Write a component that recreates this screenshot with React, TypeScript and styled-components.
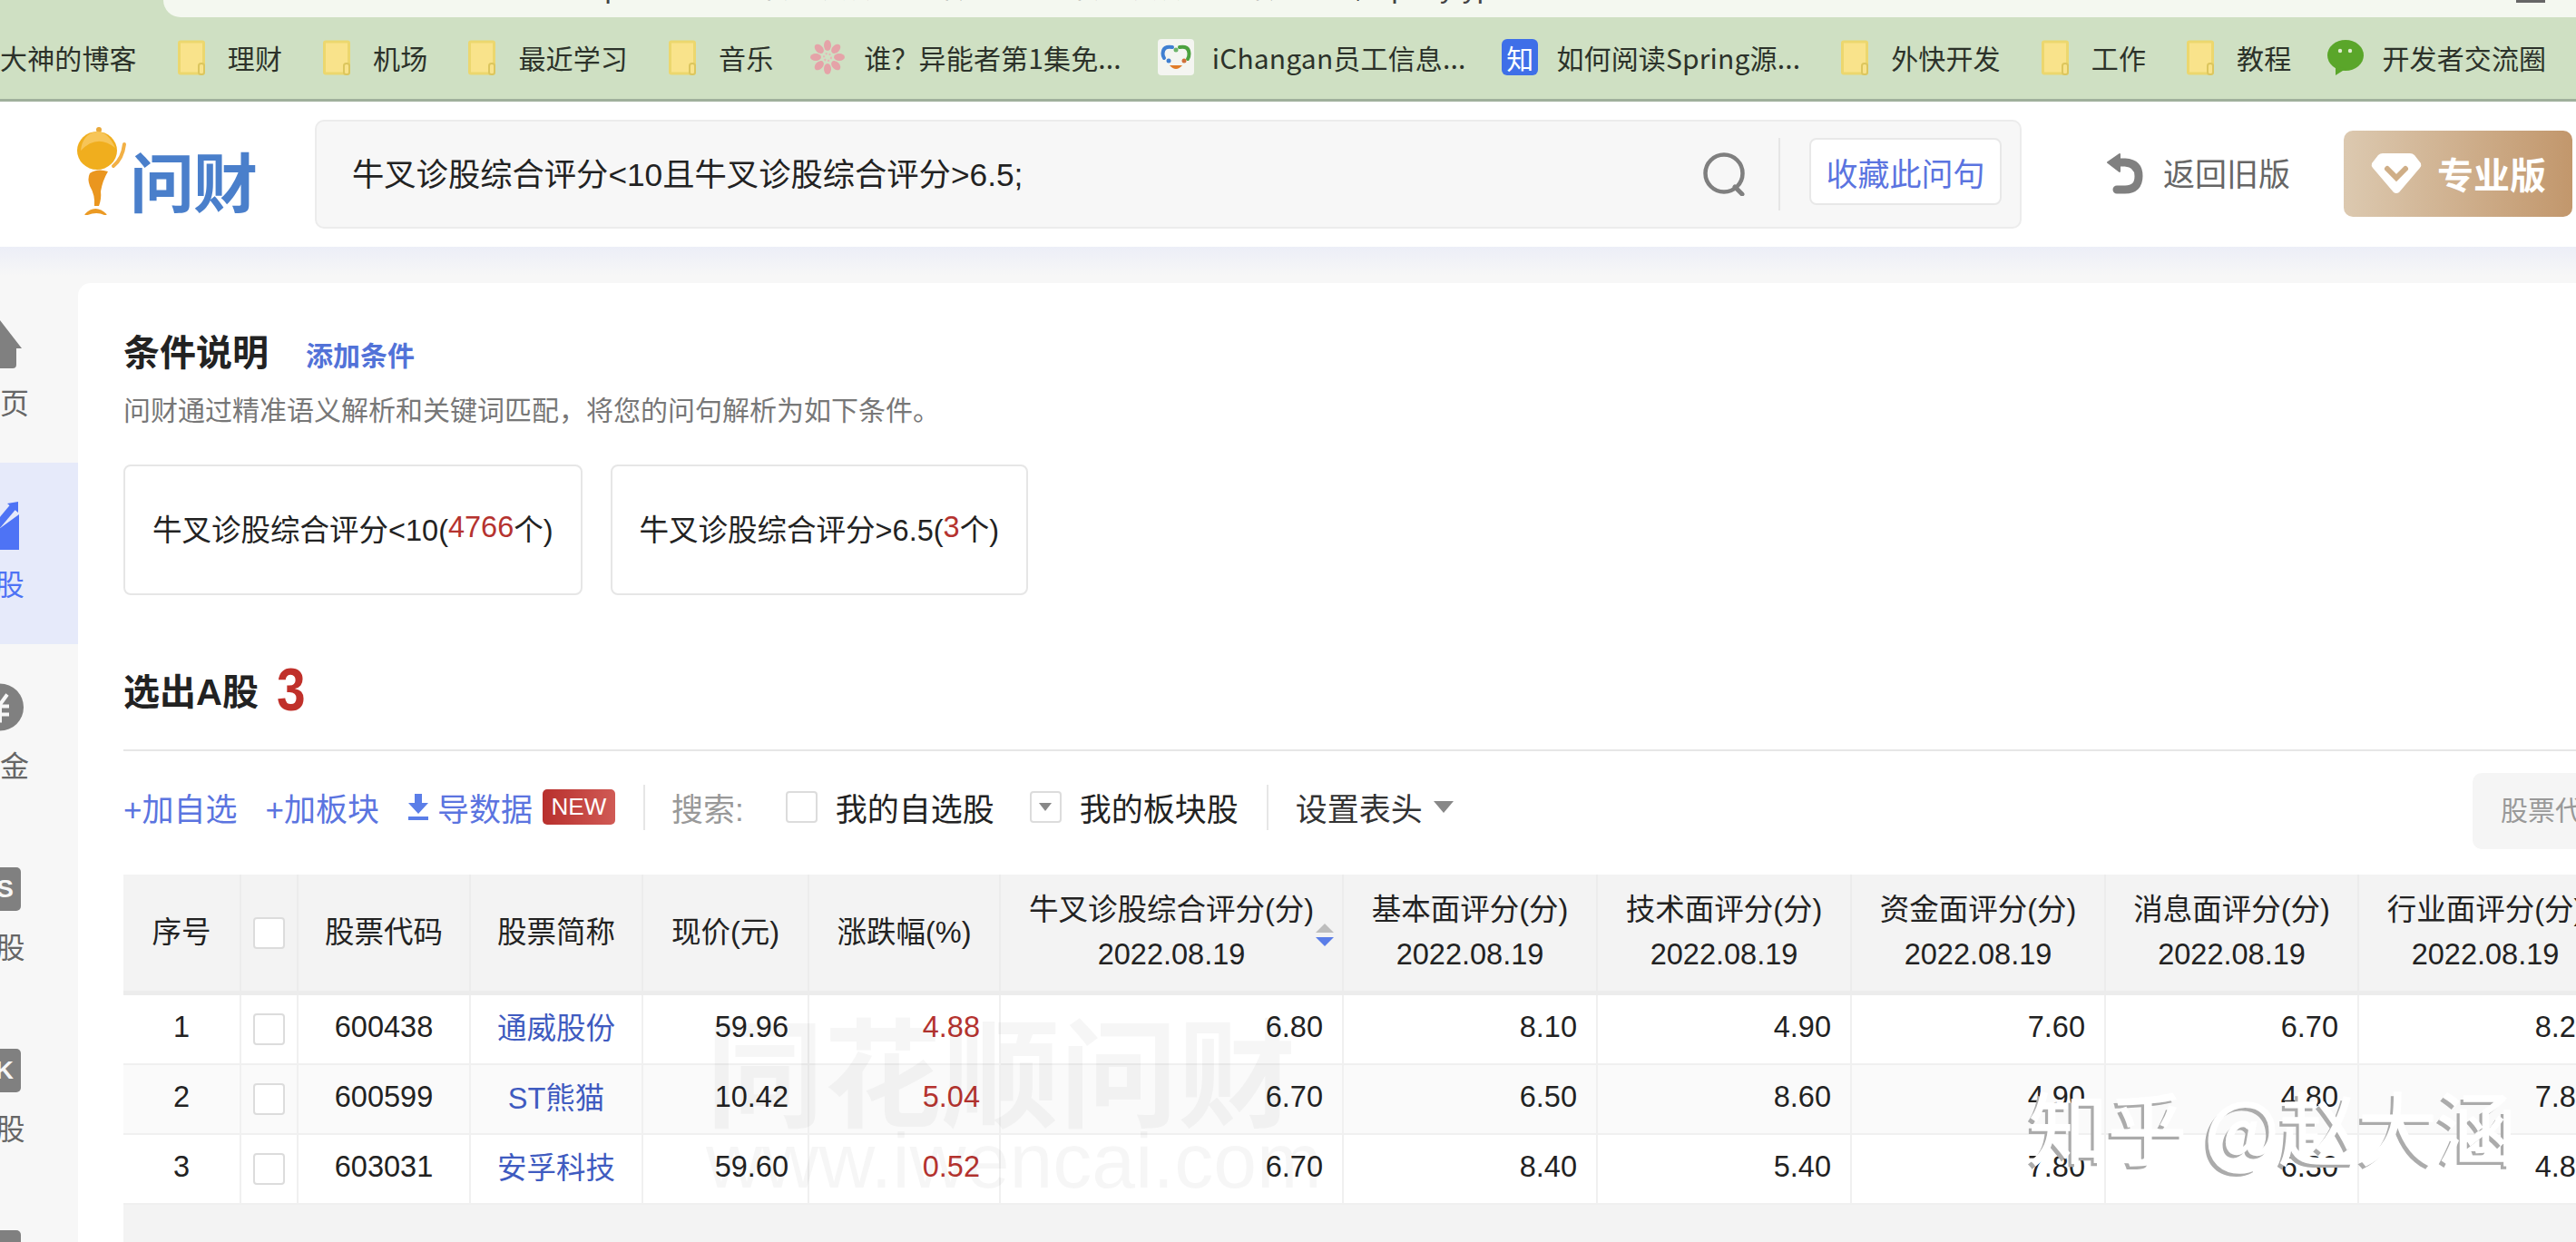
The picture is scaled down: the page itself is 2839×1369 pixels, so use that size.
import styled, { createGlobalStyle } from 'styled-components'

const GlobalStyle = createGlobalStyle`
  html, body {
    margin: 0;
    padding: 0;
    overflow: hidden;
    background: #f7f7f7;
    font-family: "Liberation Sans", "Noto Sans CJK SC", sans-serif;
  }
  * { box-sizing: border-box; }
`

const COLUMNS = '130px 63px 190px 190px 183px 211px 378px 280px 280px 280px 279px 280px'

const bookmarks = [
  { icon: 'none', label: '大神的博客' },
  { icon: 'folder', label: '理财' },
  { icon: 'folder', label: '机场' },
  { icon: 'folder', label: '最近学习' },
  { icon: 'folder', label: '音乐' },
  { icon: 'flower', label: '谁？异能者第1集免...' },
  { icon: 'changan', label: 'iChangan员工信息...' },
  { icon: 'zhi', label: '如何阅读Spring源...' },
  { icon: 'folder', label: '外快开发' },
  { icon: 'folder', label: '工作' },
  { icon: 'folder', label: '教程' },
  { icon: 'wechat', label: '开发者交流圈' },
]

const scoreHeads = ['基本面评分(分)', '技术面评分(分)', '资金面评分(分)', '消息面评分(分)', '行业面评分(分)']

const rows = [
  { no: 1, code: '600438', name: '通威股份', price: '59.96', pct: '4.88', scores: ['6.80', '8.10', '4.90', '7.60', '6.70', '8.20'] },
  { no: 2, code: '600599', name: 'ST熊猫', price: '10.42', pct: '5.04', scores: ['6.70', '6.50', '8.60', '4.90', '4.80', '7.80'] },
  { no: 3, code: '603031', name: '安孚科技', price: '59.60', pct: '0.52', scores: ['6.70', '8.40', '5.40', '7.80', '6.30', '4.80'] },
]

function FolderIcon() {
  return (
    <svg width="40" height="40" viewBox="0 0 40 40">
      <rect x="6.5" y="3" width="27" height="35" rx="1.5" fill="#f9e38b" stroke="#ecd76e" strokeWidth="3" />
      <rect x="28" y="27" width="6" height="12" rx="2.5" fill="#f9e38b" stroke="#dcc65e" strokeWidth="2" />
    </svg>
  )
}

function FlowerIcon() {
  return (
    <svg width="40" height="40" viewBox="-20 -20 40 40">
      {[0, 45, 90, 135, 180, 225, 270, 315].map((a) => (
        <ellipse key={a} cx="0" cy="-13" rx="4" ry="6" fill="#e5a3a8" transform={`rotate(${a})`} />
      ))}
      <circle r="4" fill="none" stroke="#e9b4b6" strokeWidth="2" strokeDasharray="2 2" />
    </svg>
  )
}

function ChanganIcon() {
  return (
    <svg width="40" height="40" viewBox="0 0 40 40">
      <rect width="40" height="40" rx="4" fill="#f4f5f1" />
      <path d="M16 9 Q6 7 5.5 16 Q5.5 19 7 21" fill="none" stroke="#3f7fd1" strokeWidth="4" strokeLinecap="round" />
      <path d="M24 9 Q34 7 34.5 16 Q34.5 20 33 22" fill="none" stroke="#4ca23f" strokeWidth="4" strokeLinecap="round" />
      <circle cx="20" cy="12" r="2.5" fill="#6db36a" />
      <circle cx="12" cy="24" r="2.5" fill="#3f7fd1" />
      <circle cx="29" cy="24" r="2.5" fill="#d0703a" />
      <path d="M13 29 Q20 37 27 29 Z" fill="#e07c28" />
    </svg>
  )
}

function WechatIcon() {
  return (
    <svg width="40" height="40" viewBox="0 0 40 40">
      <ellipse cx="20" cy="18" rx="20" ry="17" fill="#5aa62a" />
      <path d="M9 29 L9 40 L20 33 Z" fill="#5aa62a" />
      <circle cx="14" cy="13" r="2.2" fill="#dfeccf" />
      <circle cx="25" cy="13" r="2.2" fill="#dfeccf" />
    </svg>
  )
}

function BookmarkIcon({ kind }: { kind: string }) {
  if (kind === 'folder') return <FolderIcon />
  if (kind === 'flower') return <FlowerIcon />
  if (kind === 'changan') return <ChanganIcon />
  if (kind === 'wechat') return <WechatIcon />
  if (kind === 'zhi') return <ZhiBadge>知</ZhiBadge>
  return null
}

function LogoFigure() {
  return (
    <svg width="56" height="98" viewBox="0 0 56 98">
      <circle cx="24" cy="4" r="3" fill="#e9a93a" />
      <ellipse cx="22" cy="27" rx="22" ry="21" fill="#f0ae1e" />
      <path d="M4 27 Q22 8 42 24 Q34 6 22 6 Q6 8 4 27 Z" fill="#f7c558" />
      <path d="M40 44 Q50 36 52 20" fill="none" stroke="#f2b045" strokeWidth="4" strokeLinecap="round" />
      <path d="M14 52 Q22 46 34 50 Q28 60 26 72 Q27 80 24 88 L19 88 Q20 76 14 66 Q11 58 14 52 Z" fill="#ea961f" />
      <path d="M9 98 Q20 86 32 98 Q22 92 9 98 Z" fill="#eb9a24" stroke="#eb9a24" strokeWidth="2" />
    </svg>
  )
}

function SearchIcon() {
  return (
    <svg width="48" height="48" viewBox="0 0 48 48">
      <circle cx="24" cy="23" r="20.5" fill="none" stroke="#7f7f7f" strokeWidth="4.5" />
      <path d="M36 38 L44 46" stroke="#7f7f7f" strokeWidth="5" strokeLinecap="round" />
    </svg>
  )
}

function BackIcon() {
  return (
    <svg width="40" height="46" viewBox="0 0 40 46">
      <path d="M14 1 L1 10 L14 20 Z" fill="#808080" stroke="#808080" strokeWidth="2" strokeLinejoin="round" />
      <path d="M10 10 H20 Q35 11 35 25 Q35 40 20 40 H11" fill="none" stroke="#808080" strokeWidth="9" strokeLinecap="round" />
    </svg>
  )
}

function GemIcon() {
  return (
    <svg width="56" height="46" viewBox="0 0 56 46">
      <path d="M13 1 H43 Q46 1 48 3 L55 12 Q56 15 54 17 L31 44 Q28 46 25 44 L2 17 Q0 15 1 12 L8 3 Q10 1 13 1 Z" fill="#fff" />
      <path d="M18 18 L28 28 L38 18" fill="none" stroke="#cfae87" strokeWidth="6" strokeLinecap="round" />
    </svg>
  )
}

function DownloadIcon() {
  return (
    <svg width="24" height="29" viewBox="0 0 24 29">
      <path d="M8 0 H16 V10 H23 L12 22 L1 10 H8 Z" fill="#5b7ee8" />
      <rect x="1" y="25" width="22" height="4" fill="#5b7ee8" />
    </svg>
  )
}

function SideIcon({ kind }: { kind: string }) {
  if (kind === 'home') {
    return (
      <svg width="52" height="53" viewBox="-26 0 52 53">
        <path d="M0 0 L24 31 H18 V49 Q18 53 14 53 H-14 Q-18 53 -18 49 V31 H-24 Z" fill="#808080" />
      </svg>
    )
  }
  if (kind === 'pick') {
    return (
      <svg width="52" height="53" viewBox="-26 0 52 53">
        <path d="M-26 53 V30 H-1 L21 14 V53 Z" fill="#4e73f5" />
        <path d="M-6 30 L15 5" stroke="#4e73f5" strokeWidth="8" />
        <path d="M8 2 L20 0 L20 12 Z" fill="#4e73f5" />
      </svg>
    )
  }
  if (kind === 'fund') {
    return (
      <svg width="52" height="53" viewBox="-26 -26.5 52 53">
        <circle r="26" fill="#808080" />
        <path d="M-8 -14 L0 -3 L8 -14 M-10 -1 H10 M-10 8 H10 M0 -3 V17" fill="none" stroke="#f7f7f7" strokeWidth="4" />
      </svg>
    )
  }
  return <SideBadge>{kind}</SideBadge>
}

function Checkbox() {
  return <Box />
}

export default function App() {
  return (
    <Page>
      <GlobalStyle />
      <TabStrip>
        <UrlBar>
          <UrlText>www.iwencai.com/unifiedwap/result?w=牛叉诊股综合评分&lt;10且牛叉诊股综合评分&gt;6.5;&amp;querytype=stock</UrlText>
          <MenuBar />
        </UrlBar>
      </TabStrip>
      <BookmarkBar>
        {bookmarks.map((b) => (
          <Bookmark key={b.label}>
            {b.icon !== 'none' && (
              <BookmarkSlot>
                <BookmarkIcon kind={b.icon} />
              </BookmarkSlot>
            )}
            <span>{b.label}</span>
          </Bookmark>
        ))}
      </BookmarkBar>

      <Header>
        <Logo>
          <LogoFigure />
          <LogoText>问财</LogoText>
        </Logo>
        <SearchBox>
          <SearchText>牛叉诊股综合评分&lt;10且牛叉诊股综合评分&gt;6.5;</SearchText>
          <SearchIcon />
          <SearchDivider />
          <SaveButton>收藏此问句</SaveButton>
        </SearchBox>
        <BackLink>
          <BackIcon />
          <BackLabel>返回旧版</BackLabel>
        </BackLink>
        <ProButton>
          <GemIcon />
          <span>专业版</span>
        </ProButton>
      </Header>

      <Body>
        <Sidebar>
          <SideItem>
            <SideIcon kind="home" />
            <SideLabel>首页</SideLabel>
          </SideItem>
          <SideItem $active>
            <SideIcon kind="pick" />
            <SideLabel $active>A股</SideLabel>
          </SideItem>
          <SideItem>
            <SideIcon kind="fund" />
            <SideLabel>基金</SideLabel>
          </SideItem>
          <SideItem>
            <SideIcon kind="S" />
            <SideLabel>U股</SideLabel>
          </SideItem>
          <SideItem>
            <SideIcon kind="K" />
            <SideLabel>H股</SideLabel>
          </SideItem>
          <SideItem>
            <SideIcon kind="B" />
          </SideItem>
        </Sidebar>

        <Main>
          <TitleRow>
            <SectionTitle>条件说明</SectionTitle>
            <AddLink>添加条件</AddLink>
          </TitleRow>
          <Description>问财通过精准语义解析和关键词匹配，将您的问句解析为如下条件。</Description>
          <Cards>
            <Card>
              牛叉诊股综合评分&lt;10(<Red>4766</Red>个)
            </Card>
            <Card>
              牛叉诊股综合评分&gt;6.5(<Red>3</Red>个)
            </Card>
          </Cards>
          <ResultRow>
            <SectionTitle>选出A股</SectionTitle>
            <ResultCount>3</ResultCount>
          </ResultRow>
          <Rule />

          <Toolbar>
            <ToolLink>+加自选</ToolLink>
            <ToolLink $left={31}>+加板块</ToolLink>
            <ToolLink $left={31}>
              <DownloadIcon />
              导数据
            </ToolLink>
            <NewBadge>NEW</NewBadge>
            <ToolDivider $left={31} />
            <SearchLabel>搜索:</SearchLabel>
            <CheckLabel $left={46}>
              <Box />
              我的自选股
            </CheckLabel>
            <CheckLabel $left={39}>
              <Box>
                <Caret $size={7} />
              </Box>
              我的板块股
            </CheckLabel>
            <ToolDivider $left={31} />
            <HeadSetting>
              设置表头
              <Caret $size={11} />
            </HeadSetting>
            <CodeInput>股票代码或简称</CodeInput>
          </Toolbar>

          <TableWrap>
            <HeadRow>
              <HeadCell>序号</HeadCell>
              <HeadCell>
                <Checkbox />
              </HeadCell>
              <HeadCell>股票代码</HeadCell>
              <HeadCell>股票简称</HeadCell>
              <HeadCell>现价(元)</HeadCell>
              <HeadCell>涨跌幅(%)</HeadCell>
              <HeadCell>
                <div>牛叉诊股综合评分(分)</div>
                <div>2022.08.19</div>
                <SortMark>
                  <SortArrow $dir="up" />
                  <SortArrow $dir="down" />
                </SortMark>
              </HeadCell>
              {scoreHeads.map((h) => (
                <HeadCell key={h}>
                  <div>{h}</div>
                  <div>2022.08.19</div>
                </HeadCell>
              ))}
            </HeadRow>
            {rows.map((r, i) => (
              <Row key={r.code} $alt={i === 1}>
                <Cell>{r.no}</Cell>
                <Cell $box>
                  <Checkbox />
                </Cell>
                <Cell>{r.code}</Cell>
                <NameCell>{r.name}</NameCell>
                <Cell $right>{r.price}</Cell>
                <Cell $right $color="#b5332f">
                  {r.pct}
                </Cell>
                {r.scores.map((s, j) => (
                  <Cell key={j} $right>
                    {s}
                  </Cell>
                ))}
              </Row>
            ))}
            <Watermark>
              <WatermarkName>同花顺问财</WatermarkName>
              <WatermarkUrl>www.iwencai.com</WatermarkUrl>
            </Watermark>
          </TableWrap>
        </Main>
      </Body>
      <ZhihuMark>知乎 @赵大涵</ZhihuMark>
    </Page>
  )
}

const Page = styled.div`
  position: relative;
  width: 2839px;
  height: 1369px;
  display: flex;
  flex-direction: column;
  overflow: hidden;
`
const TabStrip = styled.div`
  height: 19px;
  flex: none;
  padding-left: 180px;
  background: #cfe0c3;
`
const UrlBar = styled.div`
  height: 19px;
  display: flex;
  justify-content: space-between;
  padding: 0 34px 0 90px;
  overflow: hidden;
  background: #f4f8f0;
  border-bottom-left-radius: 30px;
`
const UrlText = styled.div`
  margin-top: -33px;
  font-size: 32px;
  line-height: 38px;
  color: #444;
  white-space: nowrap;
`
const MenuBar = styled.div`
  width: 32px;
  height: 3px;
  background: #666;
`
const BookmarkBar = styled.div`
  height: 93px;
  flex: none;
  display: flex;
  align-items: center;
  gap: 40px;
  padding-bottom: 2px;
  background: #cfe0c3;
  border-bottom: 3px solid #a0b09c;
  white-space: nowrap;
`
const Bookmark = styled.div`
  display: flex;
  align-items: center;
  gap: 20px;
  font-family: "Noto Sans CJK SC", sans-serif;
  font-size: 30px;
  letter-spacing: 0.15px;
  color: #2c322a;
`
const BookmarkSlot = styled.div`
  width: 40px;
  height: 40px;
  flex: none;
`
const ZhiBadge = styled.div`
  width: 40px;
  height: 40px;
  display: flex;
  align-items: center;
  justify-content: center;
  border-radius: 6px;
  background: #3f6fe8;
  color: #fff;
  font-size: 30px;
`
const Header = styled.header`
  height: 160px;
  flex: none;
  display: flex;
  align-items: center;
  background: #fff;
`
const Logo = styled.div`
  width: 347px;
  display: flex;
  align-items: flex-end;
  padding-left: 85px;
  margin-top: -8px;
`
const LogoText = styled.div`
  margin-left: 2px;
  font-family: "Noto Sans CJK SC", sans-serif;
  font-size: 71px;
  line-height: 80px;
  font-weight: 700;
  letter-spacing: -1px;
  color: #4a7fcb;
`
const SearchBox = styled.div`
  width: 1881px;
  height: 120px;
  display: flex;
  align-items: center;
  padding: 0 20px 0 39px;
  background: #f7f7f7;
  border: 2px solid #ececec;
  border-radius: 10px;
`
const SearchText = styled.div`
  flex: 1;
  padding-bottom: 5px;
  font-size: 35.3px;
  color: #222;
`
const SearchDivider = styled.div`
  width: 2px;
  height: 80px;
  margin: 0 32px 0 36px;
  background: #e6e6e6;
`
const SaveButton = styled.div`
  width: 212px;
  height: 74px;
  display: flex;
  align-items: center;
  justify-content: center;
  margin-top: -6px;
  background: #fff;
  border: 2px solid #e8e8e8;
  border-radius: 8px;
  font-size: 35px;
  color: #5b74e0;
`
const BackLink = styled.div`
  display: flex;
  align-items: center;
  gap: 22px;
  margin-left: 94px;
  font-size: 35px;
  color: #666;
`
const BackLabel = styled.span`
  padding-bottom: 5px;
`
const ProButton = styled.div`
  width: 252px;
  height: 95px;
  display: flex;
  align-items: center;
  gap: 17px;
  margin: -2px 0 0 59px;
  padding-left: 30px;
  border-radius: 10px;
  background: linear-gradient(90deg, #dcc9b0, #c2976c);
  color: #fff;
  font-size: 40px;
  font-weight: 700;
`
const Body = styled.div`
  flex: 1;
  display: flex;
  min-height: 0;
  padding-top: 40px;
  background: linear-gradient(#eceef7, #f7f7f7 32px);
`
const Sidebar = styled.nav`
  width: 86px;
  flex: none;
  margin-top: -2px;
  overflow: hidden;
`
const SideItem = styled.div<{ $active?: boolean }>`
  width: 86px;
  height: 200px;
  display: flex;
  flex-direction: column;
  align-items: flex-start;
  padding-top: 43px;
  background: ${(p) => (p.$active ? '#e6eafa' : 'transparent')};
  svg {
    margin-left: -26px;
  }
`
const SideLabel = styled.div<{ $active?: boolean }>`
  margin: 19px 0 0;
  transform: translateX(-50%);
  font-size: 32px;
  line-height: 40px;
  white-space: nowrap;
  color: ${(p) => (p.$active ? '#4e73f5' : '#666')};
`
const SideBadge = styled.div`
  width: 48px;
  height: 48px;
  margin: 3px 0 2px -25px;
  display: flex;
  align-items: center;
  justify-content: flex-end;
  padding-right: 8px;
  border-radius: 5px;
  background: #808080;
  color: #f7f7f7;
  font-size: 28px;
  font-weight: 700;
`
const Main = styled.main`
  flex: 1;
  min-width: 0;
  display: flex;
  flex-direction: column;
  padding-left: 50px;
  overflow: hidden;
  background: #fff;
  border-top-left-radius: 14px;
`
const TitleRow = styled.div`
  display: flex;
  align-items: center;
  gap: 41px;
  height: 52px;
  margin-top: 50px;
  padding-bottom: 5px;
  flex: none;
`
const SectionTitle = styled.h2`
  margin: 0;
  font-size: 40px;
  font-weight: 700;
  color: #222;
`
const AddLink = styled.span`
  margin-top: 8px;
  font-size: 30px;
  font-weight: 700;
  color: #5272d8;
`
const Description = styled.p`
  margin: 19px 0 0;
  flex: none;
  font-size: 30px;
  line-height: 40px;
  color: #777;
`
const Cards = styled.div`
  display: flex;
  gap: 31px;
  margin-top: 39px;
  flex: none;
`
const Card = styled.div`
  height: 144px;
  display: flex;
  align-items: center;
  padding: 0 30px 6px;
  border: 2px solid #e6e6e6;
  border-radius: 8px;
  font-size: 32.5px;
  color: #222;
  white-space: pre;
`
const Red = styled.span`
  color: #b5332f;
`
const ResultRow = styled.div`
  display: flex;
  align-items: center;
  gap: 20px;
  height: 60px;
  margin-top: 76px;
  padding-bottom: 5px;
  flex: none;
`
const ResultCount = styled.span`
  font-size: 66px;
  font-weight: 700;
  color: #c0302a;
  transform: scaleX(0.86);
  transform-origin: left center;
`
const Rule = styled.div`
  height: 2px;
  margin-top: 34px;
  flex: none;
  background: #e6e6e6;
`
const Toolbar = styled.div`
  height: 86px;
  margin-top: 21px;
  padding-bottom: 5px;
  display: flex;
  align-items: center;
  flex: none;
  font-size: 35px;
  white-space: nowrap;
`
const ToolLink = styled.span<{ $left?: number }>`
  display: flex;
  align-items: center;
  gap: 9px;
  margin-left: ${(p) => p.$left ?? 0}px;
  color: #5b74e0;
`
const NewBadge = styled.span`
  width: 80px;
  height: 39px;
  display: flex;
  align-items: center;
  justify-content: center;
  margin-left: 11px;
  border-radius: 5px;
  background: linear-gradient(90deg, #b8302d, #d05a55);
  color: #fff;
  font-size: 26px;
`
const ToolDivider = styled.span<{ $left: number }>`
  width: 2px;
  height: 50px;
  margin-left: ${(p) => p.$left}px;
  background: #e6e6e6;
`
const SearchLabel = styled.span`
  margin-left: 29px;
  font-size: 35px;
  color: #999;
`
const CheckLabel = styled.label<{ $left: number }>`
  display: flex;
  align-items: center;
  gap: 20px;
  margin-left: ${(p) => p.$left}px;
  color: #222;
`
const Box = styled.span`
  width: 35px;
  height: 35px;
  display: inline-flex;
  align-items: center;
  justify-content: center;
  flex: none;
  background: #fff;
  border: 2px solid #dcdcdc;
  border-radius: 4px;
`
const Caret = styled.span<{ $size: number }>`
  width: 0;
  height: 0;
  border-left: ${(p) => p.$size}px solid transparent;
  border-right: ${(p) => p.$size}px solid transparent;
  border-top: ${(p) => p.$size + 2}px solid #888;
`
const HeadSetting = styled.span`
  display: flex;
  align-items: center;
  gap: 12px;
  margin-left: 30px;
  color: #333;
`
const CodeInput = styled.div`
  width: 114px;
  height: 84px;
  margin: 3px 0 -5px auto;
  padding: 0 0 5px 31px;
  display: flex;
  align-items: center;
  overflow: hidden;
  border-radius: 10px 0 0 10px;
  background: #f5f5f5;
  font-size: 30px;
  color: #999;
`
const TableWrap = styled.div`
  position: relative;
  flex: 1;
  margin-top: 29px;
  overflow: hidden;
  background: #f3f3f3;
  font-size: 32.5px;
  color: #222;
`
const HeadRow = styled.div`
  display: grid;
  grid-template-columns: ${COLUMNS};
  height: 133px;
  border-bottom: 5px solid #ececec;
`
const HeadCell = styled.div`
  position: relative;
  display: flex;
  flex-direction: column;
  align-items: center;
  justify-content: center;
  border-right: 2px solid #ececec;
  line-height: 49px;
  white-space: nowrap;
`
const SortMark = styled.div`
  position: absolute;
  right: 9px;
  top: 54px;
  display: flex;
  flex-direction: column;
  gap: 5px;
`
const SortArrow = styled.span<{ $dir: 'up' | 'down' }>`
  width: 0;
  height: 0;
  border-left: 10px solid transparent;
  border-right: 10px solid transparent;
  border-${(p) => (p.$dir === 'up' ? 'bottom' : 'top')}: 10px solid ${(p) => (p.$dir === 'up' ? '#bdbdbd' : '#5b7ee8')};
`
const Row = styled.div<{ $alt: boolean }>`
  display: grid;
  grid-template-columns: ${COLUMNS};
  height: 77px;
  background: ${(p) => (p.$alt ? '#fafafa' : '#fff')};
  border-bottom: 2px solid #f0f0f0;
`
const Cell = styled.div<{ $right?: boolean; $color?: string; $box?: boolean }>`
  display: flex;
  align-items: center;
  justify-content: ${(p) => (p.$right ? 'flex-end' : 'center')};
  padding-right: ${(p) => (p.$right ? '21px' : '0')};
  padding-bottom: ${(p) => (p.$box ? '0' : '5px')};
  border-right: 2px solid #f0f0f0;
  color: ${(p) => p.$color ?? '#222'};
`
const NameCell = styled.div`
  display: flex;
  align-items: center;
  justify-content: center;
  padding-bottom: 9px;
  border-right: 2px solid #f0f0f0;
  color: #3f5bc0;
`
const Watermark = styled.div`
  position: absolute;
  left: 642px;
  top: 146px;
  pointer-events: none;
  color: rgba(0, 0, 0, 0.035);
  white-space: nowrap;
`
const WatermarkName = styled.div`
  font-family: "Noto Sans CJK SC", sans-serif;
  font-size: 130px;
  line-height: 130px;
  font-weight: 700;
`
const WatermarkUrl = styled.div`
  margin-top: -6px;
  font-size: 86px;
  line-height: 90px;
`
const ZhihuMark = styled.div`
  position: absolute;
  left: 2236px;
  top: 1180px;
  font-family: "Noto Sans CJK SC", sans-serif;
  font-size: 87px;
  line-height: 120px;
  color: #fff;
  -webkit-text-stroke: 1.5px #fff;
  text-shadow: -4px 4px 0 #ababab;
  white-space: nowrap;
`
